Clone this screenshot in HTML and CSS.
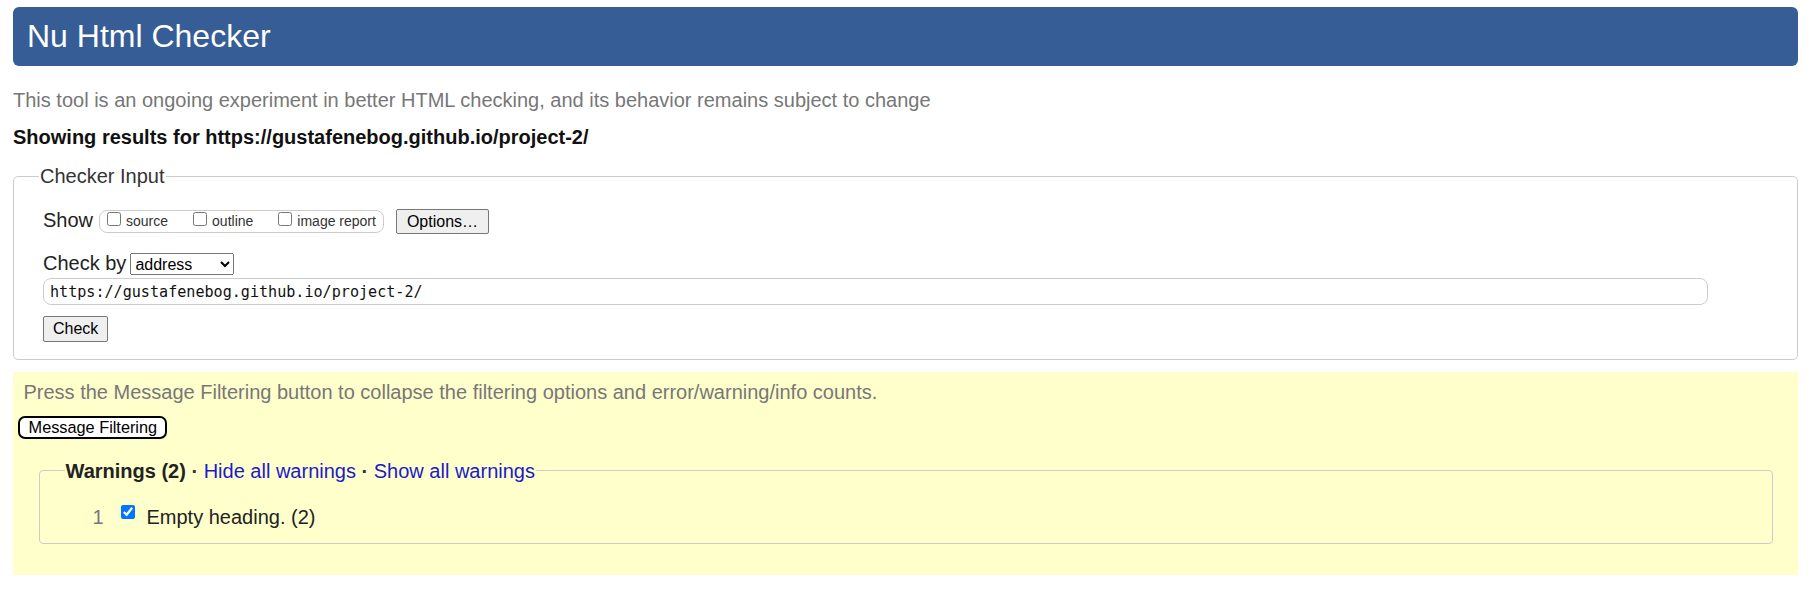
FILE: index.html
```html
<!DOCTYPE html>
<html lang="en">
<head>
<meta charset="utf-8">
<title>Showing results for https://gustafenebog.github.io/project-2/ - Nu Html Checker</title>
<link rel="stylesheet" href="styles.css">
</head>
<body>
<h1 class="title">Nu Html Checker</h1>
<p class="intro">This tool is an ongoing experiment in better HTML checking, and its behavior remains subject to change</p>
<p class="results-for">Showing results for https://gustafenebog.github.io/project-2/</p>
<form class="checker">
  <fieldset class="inputs">
    <legend class="legend">Checker Input</legend>
    <div class="show-row">
      <span class="row-label">Show</span>
      <span class="show-group">
        <label class="opt"><input type="checkbox" class="cb"><span>source</span></label>
        <label class="opt"><input type="checkbox" class="cb"><span>outline</span></label>
        <label class="opt"><input type="checkbox" class="cb"><span>image report</span></label>
      </span>
      <button type="button" class="btn btn-options">Options…</button>
    </div>
    <div class="checkby-row">
      <label class="row-label" for="docselect">Check by</label>
      <select id="docselect" class="select"><option>address</option></select>
    </div>
    <input type="url" class="url" value="https://gustafenebog.github.io/project-2/">
    <button type="button" class="btn btn-check">Check</button>
  </fieldset>
</form>
<section class="filters">
  <p class="filter-hint">Press the Message Filtering button to collapse the filtering options and error/warning/info counts.</p>
  <button type="button" class="btn-filter">Message Filtering</button>
  <fieldset class="group">
    <legend class="group-legend"><strong class="group-name">Warnings (2)</strong> <span class="sep">·</span> <a class="link" href="#">Hide all warnings</a> <span class="sep">·</span> <a class="link" href="#">Show all warnings</a></legend>
    <div class="msg-row">
      <span class="msg-num">1</span>
      <input type="checkbox" class="cb cb-msg" checked>
      <span class="msg-text">Empty heading. (2)</span>
    </div>
  </fieldset>
</section>
</body>
</html>
```

FILE: styles.css
```css
* {
  box-sizing: border-box;
}

body {
  margin: 7px 12px 0 13px;
  font-family: "Liberation Sans", Arial, sans-serif;
  font-size: 20px;
  line-height: 24px;
  color: #222;
  background: #fff;
}

.title {
  margin: 0;
  height: 59px;
  padding: 0 14px;
  line-height: 59px;
  font-size: 32px;
  font-weight: normal;
  color: #fff;
  background: #365d95;
  border-radius: 6px;
}

.intro {
  margin: 22px 0 0;
  color: #777;
}

.results-for {
  margin: 13.4px 0 0;
  font-weight: bold;
  color: #111;
}

.checker {
  margin: 14.7px 0 0;
}

.inputs {
  margin: 0;
  min-width: 0;
  padding: 20px 0 17px 29px;
  border: 1px solid #ccc;
  border-radius: 5px;
}

.legend {
  padding: 0 1px;
  margin-left: -4px;
  line-height: 24px;
  color: #333;
}

.show-row,
.checkby-row {
  display: flex;
  align-items: flex-start;
}

.checkby-row {
  margin-top: 17px;
}

.row-label {
  line-height: 24px;
  color: #222;
}

.show-group {
  display: flex;
  column-gap: 25px;
  height: 23px;
  margin: 2px 0 0 6px;
  padding: 0 7px 0 7px;
  border: 1px solid #ccc;
  border-radius: 8px;
}

.opt {
  display: flex;
  align-items: flex-start;
  font-size: 14px;
  line-height: 21px;
  color: #333;
}

.cb {
  width: 14px;
  height: 14px;
  margin: 0.5px 5px 0 0;
}

.btn {
  font-family: "Liberation Sans", Arial, sans-serif;
  font-size: 16px;
  color: #000;
  background: #efefef;
  border: 1px solid #767676;
  border-radius: 2px;
}

.btn-options {
  height: 25px;
  margin: 1px 0 0 12px;
  padding: 0 10px;
}

.select {
  width: 104px;
  height: 22px;
  margin: 2px 0 0 4px;
  font-family: "Liberation Sans", Arial, sans-serif;
  font-size: 16px;
  color: #000;
}

.url {
  display: block;
  width: 1665px;
  height: 27px;
  margin-top: 3px;
  padding: 0 6px;
  font-family: "DejaVu Sans Mono", "Liberation Mono", monospace;
  font-size: 15.1px;
  color: #111;
  border: 1px solid #ccc;
  border-radius: 8px;
}

.btn-check {
  display: block;
  height: 26px;
  margin-top: 10.5px;
  padding: 0 9px;
}

.filters {
  margin-top: 12px;
  padding: 8.4px 0 30.5px;
  background: #ffffcc;
}

.filter-hint {
  margin: 0 0 0 10.5px;
  color: #777;
}

.btn-filter {
  display: block;
  height: 23px;
  margin: 11.6px 0 0 4.6px;
  padding: 0 8px 0 9px;
  font-family: "Liberation Sans", Arial, sans-serif;
  font-size: 16.3px;
  color: #000;
  background: #fff;
  border: 2px solid #000;
  border-radius: 7px;
}

.group {
  margin: 20px 25.5px 0;
  min-width: 0;
  padding: 22.3px 0 14.4px 26px;
  border: 1px solid #ccc;
  border-radius: 4px;
}

.group-legend {
  padding: 0 1px;
  margin-left: -1px;
  line-height: 24px;
}

.group-name {
  color: #222;
}

.sep {
  color: #333;
  font-weight: bold;
}

.link {
  color: #1a1acc;
  text-decoration: none;
}

.msg-row {
  display: flex;
  align-items: flex-start;
}

.msg-num {
  width: 38px;
  text-align: right;
  color: #777;
}

.cb-msg {
  margin: 0.6px 12px 0 17px;
}

.msg-text {
  color: #222;
}
```
